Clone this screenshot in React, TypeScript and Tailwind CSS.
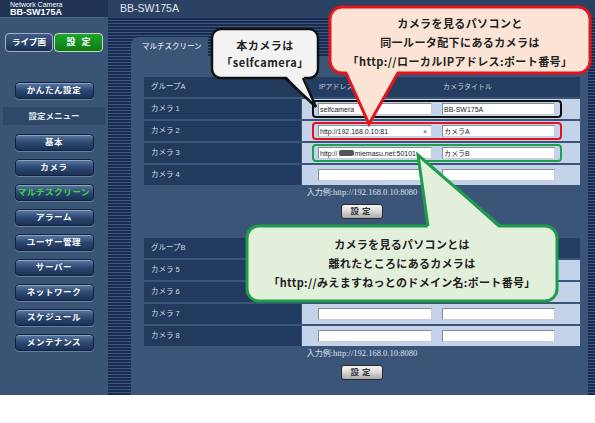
import React from "react";

type Row = { label: string; ip?: React.ReactNode; title?: string; clear?: boolean };

const stripes =
  "bg-[repeating-linear-gradient(180deg,#192b4e_0px,#192b4e_2px,#3a5580_2px,#3a5580_3px)]";

function MenuBtn({ label, active }: { label: string; active?: boolean }) {
  return (
    <div
      className={
        "w-[79px] h-[17px] rounded-[4px] border border-[#14223a] bg-linear-to-b from-[#5b79a3] via-[#2d4871] to-[#1b3157] shadow-[inset_0_1px_0_#8aa2c4,0_1px_0_#6580a6] flex items-center justify-center text-[8.5px] font-bold tracking-[0.6px] " +
        (active ? "text-[#3ad83a]" : "text-white")
      }
    >
      {label}
    </div>
  );
}

function Field({ w, children }: { w: string; children?: React.ReactNode }) {
  return (
    <div
      className={
        w +
        " h-[12px] bg-white border border-[#858d99] border-b-[#c9ced6] border-r-[#c9ced6] flex items-center justify-between pl-[1px] pr-[4px] text-[7px] leading-none text-[#222]"
      }
    >
      {children}
    </div>
  );
}

function Group({ name, rows, className }: { name: string; rows: Row[]; className?: string }) {
  return (
    <div className={className}>
      <div className="grid grid-cols-[157px_1fr] gap-x-[1px] gap-y-[2px]">
        <div className="h-[20px] bg-[#223a5e] flex items-center pl-[7px] text-[7.5px] text-[#d3dae6]">
          {name}
        </div>
        <div className="h-[20px] bg-[#253d61] flex items-center pl-[17px] gap-[10px] text-[7px] text-[#c3cddd]">
          <span className="w-[114px]">IPアドレス</span>
          <span>カメラタイトル</span>
        </div>
        {rows.map((r) => (
          <React.Fragment key={r.label}>
            <div className="h-[20px] bg-[#223a5e] flex items-center pl-[7px] text-[7.5px] text-[#d3dae6]">
              {r.label}
            </div>
            <div className="h-[20px] bg-[#c5d3ea] flex items-center pl-[16px] gap-[10px]">
              <Field w="w-[114px]">
                <span className="flex items-center">{r.ip}</span>
                {r.clear && <span className="text-[7px] text-[#444]">×</span>}
              </Field>
              <Field w="w-[113px]">
                <span>{r.title}</span>
              </Field>
            </div>
          </React.Fragment>
        ))}
      </div>
      <div className="mt-[1px] h-[12px] text-center text-[8px] leading-[12px] text-[#dbe1ea]">
        入力例:
        <span className="font-['Liberation_Serif',serif] text-[8.5px]">http://192.168.0.10:8080</span>
      </div>
      <div className="mt-[6px] flex justify-center">
        <div className="w-[42px] h-[15px] rounded-[3px] border border-[#2a2a2a] bg-linear-to-b from-[#f4f4f4] via-[#d8d8d8] to-[#a9a9a9] flex items-center justify-center text-[8.5px] font-bold text-[#333] tracking-[3px]">
          設定
        </div>
      </div>
    </div>
  );
}

export default function App() {
  const groupA: Row[] = [
    { label: "カメラ 1", ip: "selfcamera", title: "BB-SW175A" },
    { label: "カメラ 2", ip: "http://192.168.0.10:81", title: "カメラA", clear: true },
    {
      label: "カメラ 3",
      ip: (
        <>
          http://
          <span className="inline-block w-[15px] h-[6px] rounded-[2px] bg-[#555] mx-[1px]" />
          miemasu.net:50101
        </>
      ),
      title: "カメラB",
    },
    { label: "カメラ 4" },
  ];
  const groupB: Row[] = [
    { label: "カメラ 5" },
    { label: "カメラ 6" },
    { label: "カメラ 7" },
    { label: "カメラ 8" },
  ];

  return (
    <div className="relative w-[595px] h-[423px] bg-white overflow-hidden font-['Liberation_Sans','Noto_Sans_CJK_JP',sans-serif]">
      <div className="h-[395px] flex flex-col">
        {/* header */}
        <div className="h-[18px] flex">
          <div className="w-[108px] bg-[#1f3354] border-b border-[#4c6486] pl-[10px] flex flex-col justify-center text-white">
            <div className="text-[7px] leading-[7px]">Network Camera</div>
            <div className="text-[9px] leading-[9px] font-bold">BB-SW175A</div>
          </div>
          <div className="flex-1 bg-[#2c4263] pl-[12px] flex items-center text-[10.5px] text-[#dfe6ef]">
            BB-SW175A
          </div>
        </div>

        <div className="flex-1 flex">
          {/* sidebar */}
          <aside className="w-[108px] bg-[#3a5476] flex flex-col items-center pt-[15px]">
            <div className="flex gap-[1px]">
              <div className="w-[48px] h-[19px] rounded-[4px] border border-[#9fb0c6] bg-linear-to-b from-[#405c86] to-[#1b3053] flex items-center justify-center text-[8.5px] font-bold text-white">
                ライブ画
              </div>
              <div className="w-[49px] h-[19px] rounded-[4px] border border-[#c9d6c2] bg-linear-to-b from-[#1ea52a] to-[#0a7a12] flex items-center justify-center text-[9px] font-bold text-white tracking-[6px] pl-[6px]">
                設定
              </div>
            </div>
            <div className="mt-[30px]">
              <MenuBtn label="かんたん設定" />
            </div>
            <div className="mt-[8px] w-[102px] h-[18px] bg-[#2f4769] flex items-center justify-center text-[8.5px] font-bold text-[#e3e8f0]">
              設定メニュー
            </div>
            <div className="mt-[9px] flex flex-col gap-[8px]">
              <MenuBtn label="基本" />
              <MenuBtn label="カメラ" />
              <MenuBtn label="マルチスクリーン" active />
              <MenuBtn label="アラーム" />
              <MenuBtn label="ユーザー管理" />
              <MenuBtn label="サーバー" />
              <MenuBtn label="ネットワーク" />
              <MenuBtn label="スケジュール" />
              <MenuBtn label="メンテナンス" />
            </div>
          </aside>

          {/* main */}
          <main className={"flex-1 flex flex-col pl-[23px] pt-[19px] pr-[7px] " + stripes}>
            <div className="w-[77px] h-[20px] rounded-tl-[8px] bg-[#3b5578] flex items-center pl-[11px] text-[7.5px] text-white">
              マルチスクリーン
            </div>
            <div className="flex-1 bg-[#3b5578] pl-[13px] pr-[8px] pt-[20px]">
              <Group name="グループA" rows={groupA} />
              <Group name="グループB" rows={groupB} className="mt-[19px]" />
            </div>
          </main>
        </div>
      </div>

      {/* annotations */}
      <svg className="absolute left-0 top-0 pointer-events-none" width="595" height="423" viewBox="0 0 595 423">
        <rect x="313" y="101" width="248" height="16" rx="3" fill="none" stroke="#111" strokeWidth="2" />
        <rect x="313" y="123" width="248" height="16" rx="3" fill="none" stroke="#e0141e" strokeWidth="2" />
        <rect x="313" y="145" width="248" height="16" rx="3" fill="none" stroke="#1fa04c" strokeWidth="2" />

        <rect x="212" y="29" width="106" height="49" rx="9" fill="#f3f3f3" stroke="#111" strokeWidth="2.5" />
        <polygon points="285,75 303,75 316,107" fill="#f3f3f3" />
        <polyline points="285,78 316,107 303,78" fill="none" stroke="#111" strokeWidth="2.5" />

        <rect x="330" y="7" width="260" height="66" rx="12" fill="#fbe4d5" stroke="#e3141c" strokeWidth="3" />
        <polygon points="346,70 398,70 369,124" fill="#fbe4d5" />
        <polyline points="346,73 369,124 398,73" fill="none" stroke="#e3141c" strokeWidth="3" />

        <rect x="247" y="226" width="310" height="75" rx="12" fill="#e2efda" stroke="#1d9e4b" strokeWidth="3" />
        <polygon points="428,229 500,229 418,155" fill="#e2efda" />
        <polyline points="428,226 418,155 500,226" fill="none" stroke="#1d9e4b" strokeWidth="3" />
      </svg>

      <div className="absolute left-[212px] top-[29px] w-[106px] h-[49px] flex flex-col items-center justify-center font-['Noto_Sans_CJK_JP',sans-serif] text-[11px] font-bold leading-[17px] text-[#222] tracking-[0.5px]">
        <div>本カメラは</div>
        <div>「selfcamera」</div>
      </div>
      <div className="absolute left-[330px] top-[7px] w-[260px] h-[66px] pt-[4px] flex flex-col items-center justify-center font-['Noto_Sans_CJK_JP',sans-serif] text-[11px] font-bold leading-[19px] text-[#222] tracking-[0.4px]">
        <div>カメラを見るパソコンと</div>
        <div>同一ルータ配下にあるカメラは</div>
        <div>「http://ローカルIPアドレス:ポート番号」</div>
      </div>
      <div className="absolute left-[247px] top-[226px] w-[310px] h-[75px] flex flex-col items-center justify-center font-['Noto_Sans_CJK_JP',sans-serif] text-[11px] font-bold leading-[19px] text-[#222] tracking-[0.3px]">
        <div>カメラを見るパソコンとは</div>
        <div>離れたところにあるカメラは</div>
        <div>「http://みえますねっとのドメイン名:ポート番号」</div>
      </div>
    </div>
  );
}
